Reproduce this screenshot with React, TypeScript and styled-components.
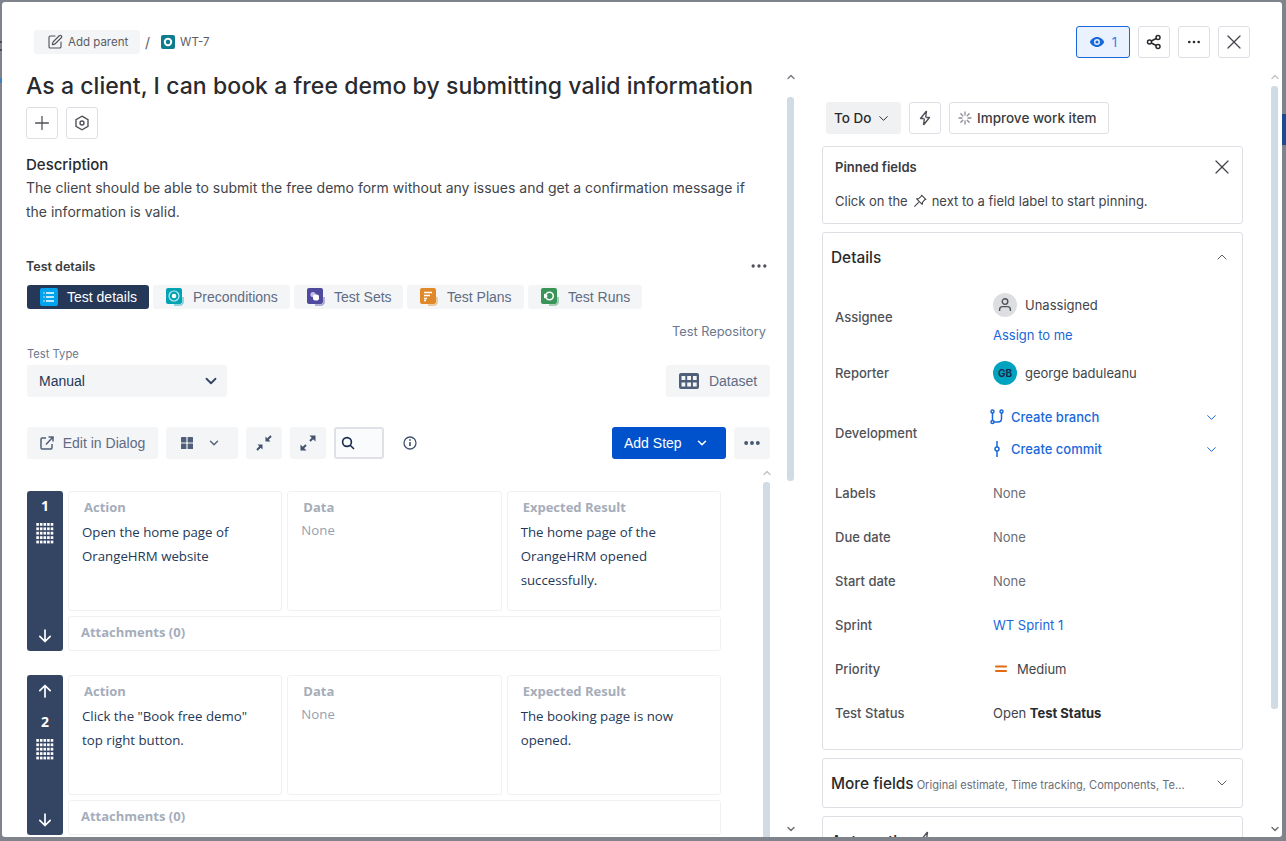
import styled, { createGlobalStyle } from 'styled-components';
import { ChevronDown, ChevronUp, Ellipsis, Plus, SquarePen, X } from 'lucide-react';

const GlobalStyle = createGlobalStyle`
  * { box-sizing: border-box; }
  html, body { margin: 0; padding: 0; overflow: hidden; }
  body { font-family: Inter, "Liberation Sans", sans-serif; color: #292a2e; }
`;

const Backdrop = styled.div`
  width: 1286px;
  height: 841px;
  padding: 2px 4px 4px 2px;
  overflow: hidden;
  background-color: #7f838b;
  background-image:
    linear-gradient(#1c4a94, #1c4a94),
    linear-gradient(#4a4e58, #4a4e58),
    linear-gradient(#4a4e58, #4a4e58),
    linear-gradient(#3f7fc4, #3f7fc4);
  background-repeat: no-repeat;
  background-size: 4px 31px, 2px 2px, 2px 2px, 2px 5px;
  background-position: 1282px 114px, 0 41px, 0 49px, 0 78px;
`;

const Dialog = styled.div`
  width: 1280px;
  height: 835px;
  background: #fff;
  border-radius: 3px;
  overflow: hidden;
  display: flex;
  flex-direction: column;
`;

const Header = styled.header`
  height: 68px;
  flex: none;
  padding: 24px 32px 0 32px;
  display: flex;
  justify-content: space-between;
  align-items: flex-start;
`;

const Crumbs = styled.div`
  display: flex;
  align-items: center;
  height: 32px;
  font-size: 11.5px;
  color: #5b5d63;
`;

const AddParent = styled.button`
  width: 106px;
  height: 24px;
  border: 0;
  border-radius: 3px;
  background: #f4f5f6;
  display: flex;
  align-items: center;
  gap: 5px;
  padding: 0 0 0 13px;
  font: 400 11.5px Inter, sans-serif;
  color: #5b5d63;
`;

const Slash = styled.span`
  margin: 0 11px 0 5px;
  font-size: 14px;
`;

const KeyLink = styled.span`
  display: flex;
  align-items: center;
  gap: 5px;
`;

const Actions = styled.div`
  display: flex;
  gap: 8px;
`;

const IconButton = styled.button<{ $active?: boolean }>`
  height: 32px;
  min-width: 32px;
  padding: 0 ${({ $active }) => ($active ? '12px' : '0')};
  display: inline-flex;
  align-items: center;
  justify-content: center;
  gap: 7px;
  border-radius: 3px;
  font: 400 13px Inter, sans-serif;
  color: ${({ $active }) => ($active ? '#357de8' : '#292a2e')};
  background: ${({ $active }) => ($active ? '#e9f2fe' : '#fff')};
  border: 1px solid ${({ $active }) => ($active ? '#1868db' : '#dcdfe4')};
`;

const Body = styled.div`
  flex: 1;
  min-height: 0;
  display: flex;
`;

const MainPane = styled.main`
  width: 792px;
  flex: none;
  display: flex;
  padding-left: 24px;
`;

const MainContent = styled.div`
  width: 744px;
  flex: none;
`;

const Title = styled.h1`
  margin: 0;
  height: 34px;
  font-size: 23px;
  line-height: 32px;
  font-weight: 500;
  letter-spacing: 0.06px;
  white-space: nowrap;
`;

const QuickActions = styled.div`
  display: flex;
  gap: 8px;
  margin-top: 3px;
  color: #505258;
`;

const SectionTitle = styled.h2`
  margin: 16px 0 0;
  font-size: 15px;
  line-height: 20px;
  font-weight: 500;
`;

const Paragraph = styled.p`
  margin: 1px 0 0;
  font-size: 14px;
  line-height: 24px;
  color: #42444a;
  width: 730px;
`;

const PanelHead = styled.div`
  margin: 32px 0 0;
  height: 20px;
  display: flex;
  justify-content: space-between;
  align-items: center;
  font-size: 12.5px;
  font-weight: 600;
  color: #3a3b40;
  padding-right: 1px;
`;

const Tabs = styled.div`
  margin: 9px 0 0 1px;
  display: flex;
  gap: 4px;
`;

const Tab = styled.div<{ $active?: boolean; $width: number }>`
  height: 24px;
  width: ${({ $width }) => $width}px;
  padding-left: 13px;
  border-radius: 3px;
  display: flex;
  align-items: center;
  gap: 9px;
  font: 400 14px "Liberation Sans", Arial, sans-serif;
  color: ${({ $active }) => ($active ? '#fff' : '#5e6c84')};
  background: ${({ $active }) => ($active ? '#253858' : '#f4f5f7')};
`;

const RepoLink = styled.div`
  margin-top: 13px;
  padding-right: 4px;
  height: 20px;
  line-height: 20px;
  text-align: right;
  font-size: 12.8px;
  color: #6b778c;
`;

const TypeRow = styled.div`
  display: flex;
  justify-content: space-between;
  align-items: flex-end;
  padding-left: 1px;
  margin-top: 4px;
`;

const TypeLabel = styled.div`
  font: 400 11.2px/16px Inter, sans-serif;
  color: #6b778c;
  margin-bottom: 3px;
`;

const Select = styled.div`
  width: 200px;
  height: 32px;
  padding: 0 7px 0 12px;
  border-radius: 3px;
  background: #f4f5f7;
  display: flex;
  align-items: center;
  justify-content: space-between;
  font: 400 14px "Liberation Sans", Arial, sans-serif;
  color: #253858;
`;

const Toolbar = styled.div`
  margin-top: 30px;
  padding-left: 1px;
  display: flex;
  align-items: center;
  gap: 8px;
`;

const ToolButton = styled.button<{ $width: number }>`
  width: ${({ $width }) => $width}px;
  height: 32px;
  border: 0;
  border-radius: 3px;
  background: #f4f5f7;
  display: flex;
  align-items: center;
  justify-content: center;
  gap: 9px;
  padding: 0;
  font: 400 14px "Liberation Sans", Arial, sans-serif;
  color: #5e6c84;
`;

const DatasetButton = styled(ToolButton)`
  gap: 10px;
`;

const ViewButton = styled(ToolButton)`
  gap: 14px;
  padding-right: 2px;
`;

const PrimaryButton = styled(ToolButton)`
  margin-left: auto;
  background: #0052cc;
  color: #fff;
  gap: 13px;
  justify-content: flex-start;
  padding-left: 12px;
`;

const SearchBox = styled.div`
  width: 50px;
  height: 32px;
  border: 2px solid #dfe1e6;
  border-radius: 3px;
  background: #fafbfc;
  display: flex;
  align-items: center;
  padding-left: 5px;
`;

const InfoSlot = styled.div`
  margin-left: 11px;
  display: flex;
`;

const StepsArea = styled.div`
  margin-top: 10px;
  display: flex;
  justify-content: space-between;
`;

const StepList = styled.div`
  padding: 22px 0 0 1px;
  display: flex;
  flex-direction: column;
  gap: 24px;
`;

const Step = styled.article`
  display: flex;
  gap: 5px;
`;

const StepRail = styled.div`
  width: 36px;
  height: 160px;
  flex: none;
  background: #344563;
  border-radius: 3px;
  color: #fff;
  display: flex;
  flex-direction: column;
  align-items: center;
  padding: 7px 0 6px;
  font: 700 14px/16px "Open Sans", sans-serif;
`;

const DragGrid = styled.div`
  margin-top: 8px;
`;

const ArrowSlot = styled.div<{ $bottom?: boolean }>`
  height: 18px;
  display: flex;
  align-items: center;
  margin-bottom: ${({ $bottom }) => ($bottom ? '0' : '14px')};
  margin-top: ${({ $bottom }) => ($bottom ? 'auto' : '0')};
`;

const StepBody = styled.div`
  width: 653px;
  display: flex;
  flex-direction: column;
  gap: 5px;
`;

const StepColumns = styled.div`
  display: flex;
  gap: 5px;
`;

const StepCard = styled.div`
  width: 215px;
  height: 120px;
  flex: 1;
  border: 1px solid #f0f1f3;
  border-radius: 3px;
  padding: 5px 13px;
  font: 400 13.25px/24px "Open Sans", sans-serif;
  color: #253858;
`;

const CardLabel = styled.div`
  margin: 0 0 0 2px;
  height: 23px;
  line-height: 20px;
  font-size: 13px;
  font-weight: 700;
  color: #a5adba;
`;

const EmptyValue = styled.div`
  margin-top: -2px;
  color: #97a0af;
`;

const Attachments = styled.div`
  height: 35px;
  border: 1px solid #f0f1f3;
  border-radius: 3px;
  padding-left: 12px;
  font: 700 13px/31px "Open Sans", sans-serif;
  color: #a5adba;
`;

const RailColumn = styled.div<{ $marginLeft: number }>`
  width: 7px;
  margin-left: ${({ $marginLeft }) => $marginLeft}px;
  flex: none;
  display: flex;
  flex-direction: column;
  align-items: center;
  overflow: visible;
`;

const RailArrow = styled.div<{ $color: string; $down?: boolean; $top?: number }>`
  height: 8px;
  width: 12px;
  flex: none;
  display: flex;
  align-items: center;
  justify-content: center;
  color: ${({ $color }) => $color};
  margin-top: ${({ $down, $top }) => ($down ? 'auto' : `${$top ?? 0}px`)};
  margin-bottom: ${({ $down }) => ($down ? '4px' : '0')};
`;

const RailThumb = styled.div<{ $top: number; $height: number }>`
  width: 7px;
  height: ${({ $height }) => $height}px;
  margin-top: ${({ $top }) => $top}px;
  flex: none;
  background: #d0dbe4;
  border-radius: 3px;
`;

const SidePane = styled.aside`
  width: 488px;
  flex: none;
  display: flex;
  padding-left: 28px;
`;

const SideContent = styled.div`
  width: 421px;
  flex: none;
`;

const StatusRow = styled.div`
  margin: 32px 0 0 4px;
  display: flex;
  gap: 8px;
`;

const StatusButton = styled.button`
  width: 75px;
  height: 32px;
  border: 0;
  border-radius: 3px;
  background: #f0f1f2;
  display: flex;
  align-items: center;
  gap: 5px;
  padding: 0 0 0 8px;
  font: 500 13.5px Inter, sans-serif;
  color: #292a2e;
`;

const ImproveButton = styled(IconButton)`
  width: 160px;
  gap: 5px;
  justify-content: flex-start;
  padding-left: 8px;
  font-weight: 500;
  font-size: 13.5px;
  color: #3a3b40;
`;

const Panel = styled.section`
  margin-top: 8px;
  border: 1px solid #dcdfe4;
  border-radius: 3px;
`;

const PinnedPanel = styled(Panel)`
  margin-top: 12px;
  height: 78px;
  padding: 10px 12px 0;
`;

const PinnedHead = styled.div`
  display: flex;
  justify-content: space-between;
  align-items: center;
  height: 20px;
  font-size: 13px;
  font-weight: 600;
  color: #3a3b40;
`;

const PinnedClose = styled.div`
  display: flex;
  margin-right: -4px;
`;

const PinnedText = styled.div`
  margin-top: 14px;
  display: flex;
  align-items: center;
  gap: 5px;
  font-size: 13px;
  line-height: 20px;
  color: #42444a;
`;

const PanelHeader = styled.div`
  height: 50px;
  padding: 0 12px 2px 8px;
  display: flex;
  align-items: center;
  justify-content: space-between;
  font-size: 15.4px;
  font-weight: 500;
  color: #292a2e;
`;

const CollapsedHeader = styled(PanelHeader)`
  height: 48px;
  padding-bottom: 0;
`;

const HeaderText = styled.div`
  display: flex;
  align-items: baseline;
  gap: 3px;
  white-space: nowrap;
`;

const HeaderHint = styled.span`
  font-size: 11.1px;
  font-weight: 400;
  color: #6b6e76;
`;

const FieldList = styled.div`
  padding: 0 12px 14px;
`;

const Field = styled.div<{ $height?: number }>`
  min-height: ${({ $height }) => $height ?? 44}px;
  display: grid;
  grid-template-columns: 158px 1fr;
  align-items: center;
`;

const FieldLabel = styled.div`
  font-size: 13px;
  font-weight: 500;
  color: #505258;
`;

const FieldValue = styled.div<{ $muted?: boolean }>`
  font-size: 13px;
  color: ${({ $muted }) => ($muted ? '#6b6e76' : '#42444a')};
`;

const AssigneeValue = styled(FieldValue)`
  padding-top: 4px;
`;

const Person = styled.div`
  display: flex;
  align-items: center;
  gap: 8px;
  height: 24px;
`;

const Avatar = styled.div<{ $teal?: boolean }>`
  width: 24px;
  height: 24px;
  border-radius: 50%;
  display: flex;
  align-items: center;
  justify-content: center;
  background: ${({ $teal }) => ($teal ? '#00a3bf' : '#dddee1')};
  color: #172b4d;
  font-size: 10px;
  font-weight: 700;
`;

const TextLink = styled.a<{ $top?: number }>`
  display: block;
  margin-top: ${({ $top }) => $top ?? 0}px;
  line-height: 20px;
  color: #1868db;
`;

const DevRow = styled.div`
  height: 32px;
  display: flex;
  align-items: center;
  gap: 7px;
  padding-right: 11px;
  margin-left: -3px;
  font-weight: 500;
  color: #1868db;
`;

const DevLabel = styled.span`
  flex: 1;
`;

const PriorityValue = styled(Person)`
  gap: 10px;
  margin-left: 2px;
`;

const StrongText = styled.strong`
  color: #292a2e;
  font-weight: 700;
`;

const EyeIcon = () => (
  <svg width="16" height="16" viewBox="0 0 16 16">
    <path d="M8 3C4.6 3 2 5.4.8 8c1.2 2.6 3.8 5 7.2 5s6-2.4 7.2-5C14 5.4 11.4 3 8 3z" fill="#1868db" />
    <circle cx="8" cy="8" r="3" fill="#e9f2fe" />
    <circle cx="8" cy="8" r="1.6" fill="#1868db" />
  </svg>
);

const ShareIcon = () => (
  <svg width="16" height="16" viewBox="0 0 16 16" fill="none" stroke="#292a2e" strokeWidth="1.5">
    <circle cx="3.5" cy="8" r="2" />
    <circle cx="12" cy="3.5" r="2" />
    <circle cx="12" cy="12.5" r="2" />
    <path d="M5.3 7 10.2 4.5M5.3 9l4.9 2.5" />
  </svg>
);

const WorkItemIcon = () => (
  <svg width="14" height="14" viewBox="0 0 14 14">
    <rect width="14" height="14" rx="2" fill="#0e7c8f" />
    <circle cx="7" cy="7" r="3.2" fill="none" stroke="#fff" strokeWidth="2" />
  </svg>
);

const HexIcon = () => (
  <svg width="16" height="16" viewBox="0 0 16 16" fill="none" stroke="#505258" strokeWidth="1.4">
    <path d="M8 1.2 14 4.6v6.8L8 14.8 2 11.4V4.6z" />
    <circle cx="8" cy="8" r="2" />
  </svg>
);

const BoltIcon = () => (
  <svg width="14" height="16" viewBox="0 0 14 16" fill="none" stroke="#505258" strokeWidth="1.4" strokeLinejoin="round">
    <path d="M8.5 1 2.5 8.5h3.2M5.5 15l6-7.5H8.3M8.5 1 7.6 7.5M5.5 15l.9-6.5" />
  </svg>
);

const SparkIcon = () => (
  <svg width="14" height="14" viewBox="0 0 14 14" stroke="#8c8f97" strokeWidth="1.3" strokeLinecap="round">
    <path d="M7 1v3M7 10v3M1 7h3M10 7h3M2.8 2.8l2 2M9.2 9.2l2 2M11.2 2.8l-2 2M4.8 9.2l-2 2" />
  </svg>
);

const PinIcon = () => (
  <svg width="14" height="14" viewBox="0 0 14 14" fill="none" stroke="#42444a" strokeWidth="1.1" strokeLinejoin="round">
    <path d="M8.6 1.2 12.8 5.4 11.6 5.8 9.4 8.4 9.2 10.4 3.6 4.8 5.6 4.6 8.2 2.4zM5.8 8.2 1.4 12.6" />
  </svg>
);

const UserIcon = () => (
  <svg width="16" height="16" viewBox="0 0 16 16" fill="none" stroke="#505258" strokeWidth="1.4">
    <circle cx="8" cy="4.6" r="2.8" />
    <path d="M2.6 14v-1.6c0-1.7 1.3-2.8 3-2.8h4.8c1.7 0 3 1.1 3 2.8V14" />
  </svg>
);

const BranchIcon = () => (
  <svg width="14" height="16" viewBox="0 0 14 16" fill="none" stroke="#1868db" strokeWidth="1.5">
    <circle cx="2.5" cy="2.5" r="1.5" />
    <circle cx="11.5" cy="2.5" r="1.5" />
    <circle cx="2.5" cy="13" r="1.5" />
    <path d="M2.5 4v7.5M11.5 4v5.5c0 2.2-1.3 3.5-3.5 3.5H4" />
  </svg>
);

const CommitIcon = () => (
  <svg width="14" height="16" viewBox="0 0 14 16" fill="none" stroke="#1868db" strokeWidth="1.5">
    <circle cx="7" cy="8" r="2" />
    <path d="M7 0v6M7 10v6" />
  </svg>
);

const MediumIcon = () => (
  <svg width="12" height="8" viewBox="0 0 12 8" fill="#e56910">
    <rect width="12" height="2" rx="1" y="0.5" />
    <rect width="12" height="2" rx="1" y="5" />
  </svg>
);

const TabIcon = ({ bg, kind }: { bg: string; kind: string }) => (
  <svg width="18" height="18" viewBox="0 0 18 18">
    {kind !== 'list' && <path d="M17 9v5.5c0 1.4-1 2.5-2.5 2.5H8" fill="none" stroke={bg} strokeWidth="0.8" />}
    <rect width={kind === 'list' ? 18 : 16} height={kind === 'list' ? 18 : 16} rx="2" fill={bg} />
    {kind === 'list' && (
      <path d="M6 5h8M6 9h8M6 13h8M3.5 5h1M3.5 9h1M3.5 13h1" stroke="#fff" strokeWidth="1.3" />
    )}
    {kind === 'pre' && (
      <>
        <circle cx="8" cy="8" r="5" fill="none" stroke="#bfeaef" strokeWidth="1.2" />
        <circle cx="8" cy="8" r="2.3" fill="#fff" />
      </>
    )}
    {kind === 'sets' && (
      <>
        <circle cx="6" cy="6.5" r="2.6" fill="#c7bdf0" />
        <rect x="6" y="6.5" width="6" height="6" rx="2" fill="#fff" />
      </>
    )}
    {kind === 'plans' && <path d="M4 4.5h8M4 7.5h6M4 10.5h3M4 12.5h2" stroke="#fff" strokeWidth="1.4" />}
    {kind === 'runs' && (
      <>
        <circle cx="8.5" cy="8" r="3.8" fill="none" stroke="#fff" strokeWidth="1.6" />
        <path d="M3 5.5 7 8l-4 2.5z" fill="#fff" />
      </>
    )}
  </svg>
);

const GridIcon = () => (
  <svg width="12" height="12" viewBox="0 0 12 12" fill="#505f79">
    <rect width="5.4" height="5.4" rx="0.5" />
    <rect x="6.6" width="5.4" height="5.4" rx="0.5" />
    <rect y="6.6" width="5.4" height="5.4" rx="0.5" />
    <rect x="6.6" y="6.6" width="5.4" height="5.4" rx="0.5" />
  </svg>
);

const TableIcon = () => (
  <svg width="20" height="16" viewBox="0 0 20 16">
    <rect width="20" height="16" rx="2" fill="#505f79" />
    {[2.5, 8.2, 13.9].flatMap((x) =>
      [3, 9.5].map((y) => <rect key={`${x}-${y}`} x={x} y={y} width="3.8" height="4" fill="#f4f5f7" />),
    )}
  </svg>
);

const ExternalIcon = () => (
  <svg width="14" height="14" viewBox="0 0 14 14" fill="none" stroke="#505f79" strokeWidth="1.5">
    <path d="M6 2H2.2C1.5 2 1 2.5 1 3.2v8.6c0 .7.5 1.2 1.2 1.2h8.6c.7 0 1.2-.5 1.2-1.2V8M6 8.5 12.5 1.5M8.5 1h4.5v4.5" />
  </svg>
);

const CollapseIcon = () => (
  <svg width="16" height="16" viewBox="0 0 16 16" fill="#42526e" stroke="#42526e">
    <path d="M15 1 10.5 5.5M1 15l4.5-4.5" fill="none" strokeWidth="2" />
    <path d="M9.5 1.5v5h5zM6.5 14.5v-5h-5z" strokeWidth="0" />
  </svg>
);

const ExpandIcon = () => (
  <svg width="16" height="16" viewBox="0 0 16 16" fill="#42526e" stroke="#42526e">
    <path d="M10 6 13 3M6 10l-3 3" fill="none" strokeWidth="2" />
    <path d="M15.5.5v6l-6-6zM.5 15.5v-6l6 6z" strokeWidth="0" />
  </svg>
);

const SearchIcon = () => (
  <svg width="14" height="14" viewBox="0 0 14 14" fill="none" stroke="#172b4d" strokeWidth="1.6">
    <circle cx="6" cy="6" r="4.4" />
    <path d="M9.2 9.2 13 13" />
  </svg>
);

const InfoIcon = () => (
  <svg width="14" height="14" viewBox="0 0 14 14" fill="none" stroke="#42526e" strokeWidth="1.3">
    <circle cx="7" cy="7" r="6" />
    <path d="M7 6v4" strokeWidth="1.6" />
    <circle cx="7" cy="4" r="0.9" fill="#42526e" stroke="none" />
  </svg>
);

const DotsGrid = () => (
  <svg width="18" height="22" viewBox="0 0 18 22" fill="#fff">
    {[0, 1, 2, 3, 4].flatMap((row) =>
      [0, 1, 2, 3, 4].map((col) => (
        <rect key={`${row}-${col}`} x={col * 3.6 + 0.3} y={row * 4.4 + 1} width="2.6" height="2.8" />
      )),
    )}
  </svg>
);

const StepArrow = ({ up }: { up?: boolean }) => (
  <svg width="14" height="14" viewBox="0 0 14 14" fill="none" stroke="#fff" strokeWidth="1.7" strokeLinecap="round" strokeLinejoin="round">
    {up ? <path d="M7 13V1.5M1.8 6.7 7 1.5l5.2 5.2" /> : <path d="M7 1v11.5M1.8 7.3 7 12.5l5.2-5.2" />}
  </svg>
);

const TAB_ITEMS = [
  { label: 'Test details', kind: 'list', bg: '#00a3ee', width: 122, active: true },
  { label: 'Preconditions', kind: 'pre', bg: '#00a3b4', width: 137 },
  { label: 'Test Sets', kind: 'sets', bg: '#4f4a9e', width: 109 },
  { label: 'Test Plans', kind: 'plans', bg: '#e0892b', width: 117 },
  { label: 'Test Runs', kind: 'runs', bg: '#399557', width: 114 },
];

const STEPS = [
  {
    number: 1,
    action: ['Open the home page of', 'OrangeHRM website'],
    result: ['The home page of the', 'OrangeHRM opened', 'successfully.'],
  },
  {
    number: 2,
    action: ['Click the "Book free demo"', 'top right button.'],
    result: ['The booking page is now', 'opened.'],
  },
];

const FIELDS = ['Labels', 'Due date', 'Start date'];

const Lines = ({ lines }: { lines: string[] }) => (
  <>
    {lines.map((line) => (
      <div key={line}>{line}</div>
    ))}
  </>
);

const App = () => {
  return (
    <Backdrop>
      <GlobalStyle />
      <Dialog>
        <Header>
          <Crumbs>
            <AddParent>
              <SquarePen size={16} strokeWidth={1.7} color="#505258" />
              Add parent
            </AddParent>
            <Slash>/</Slash>
            <KeyLink>
              <WorkItemIcon />
              WT-7
            </KeyLink>
          </Crumbs>
          <Actions>
            <IconButton $active>
              <EyeIcon />1
            </IconButton>
            <IconButton>
              <ShareIcon />
            </IconButton>
            <IconButton>
              <Ellipsis size={16} />
            </IconButton>
            <IconButton>
              <X size={24} strokeWidth={1.2} color="#42444a" />
            </IconButton>
          </Actions>
        </Header>
        <Body>
          <MainPane>
            <MainContent>
              <Title>As a client, I can book a free demo by submitting valid information</Title>
              <QuickActions>
                <IconButton>
                  <Plus size={22} strokeWidth={1.4} color="#505258" />
                </IconButton>
                <IconButton>
                  <HexIcon />
                </IconButton>
              </QuickActions>
              <SectionTitle>Description</SectionTitle>
              <Paragraph>
                The client should be able to submit the free demo form without any issues and get a confirmation
                message if the information is valid.
              </Paragraph>
              <PanelHead>
                Test details
                <Ellipsis size={20} color="#505258" />
              </PanelHead>
              <Tabs>
                {TAB_ITEMS.map((tab) => (
                  <Tab key={tab.label} $active={tab.active} $width={tab.width}>
                    <TabIcon bg={tab.bg} kind={tab.kind} />
                    {tab.label}
                  </Tab>
                ))}
              </Tabs>
              <RepoLink>Test Repository</RepoLink>
              <TypeRow>
                <div>
                  <TypeLabel>Test Type</TypeLabel>
                  <Select>
                    Manual
                    <ChevronDown size={18} strokeWidth={2.4} color="#344563" />
                  </Select>
                </div>
                <DatasetButton $width={104}>
                  <TableIcon />
                  Dataset
                </DatasetButton>
              </TypeRow>
              <Toolbar>
                <ToolButton $width={131}>
                  <ExternalIcon />
                  Edit in Dialog
                </ToolButton>
                <ViewButton $width={72}>
                  <GridIcon />
                  <ChevronDown size={14} strokeWidth={2.4} color="#505f79" />
                </ViewButton>
                <ToolButton $width={36}>
                  <CollapseIcon />
                </ToolButton>
                <ToolButton $width={36}>
                  <ExpandIcon />
                </ToolButton>
                <SearchBox>
                  <SearchIcon />
                </SearchBox>
                <InfoSlot>
                  <InfoIcon />
                </InfoSlot>
                <PrimaryButton $width={114}>
                  Add Step
                  <ChevronDown size={14} strokeWidth={2.6} />
                </PrimaryButton>
                <ToolButton $width={36}>
                  <Ellipsis size={20} strokeWidth={2.6} color="#42526e" />
                </ToolButton>
              </Toolbar>
              <StepsArea>
                <StepList>
                  {STEPS.map((step) => (
                    <Step key={step.number}>
                      <StepRail>
                        {step.number > 1 && (
                          <ArrowSlot>
                            <StepArrow up />
                          </ArrowSlot>
                        )}
                        {step.number}
                        <DragGrid>
                          <DotsGrid />
                        </DragGrid>
                        <ArrowSlot $bottom>
                          <StepArrow />
                        </ArrowSlot>
                      </StepRail>
                      <StepBody>
                        <StepColumns>
                          <StepCard>
                            <CardLabel>Action</CardLabel>
                            <Lines lines={step.action} />
                          </StepCard>
                          <StepCard>
                            <CardLabel>Data</CardLabel>
                            <EmptyValue>None</EmptyValue>
                          </StepCard>
                          <StepCard>
                            <CardLabel>Expected Result</CardLabel>
                            <Lines lines={step.result} />
                          </StepCard>
                        </StepColumns>
                        <Attachments>Attachments (0)</Attachments>
                      </StepBody>
                    </Step>
                  ))}
                </StepList>
                <RailColumn $marginLeft={0}>
                  <RailArrow $color="#c3c7cc">
                    <ChevronUp size={12} strokeWidth={3} />
                  </RailArrow>
                  <RailThumb $top={5} $height={400} />
                </RailColumn>
              </StepsArea>
            </MainContent>
            <RailColumn $marginLeft={17}>
              <RailArrow $color="#7d8188" $top={3}>
                <ChevronUp size={12} strokeWidth={3} />
              </RailArrow>
              <RailThumb $top={16} $height={384} />
              <RailArrow $color="#6f7379" $down>
                <ChevronDown size={12} strokeWidth={3} />
              </RailArrow>
            </RailColumn>
          </MainPane>
          <SidePane>
            <SideContent>
              <StatusRow>
                <StatusButton>
                  To Do
                  <ChevronDown size={15} strokeWidth={1.6} />
                </StatusButton>
                <IconButton>
                  <BoltIcon />
                </IconButton>
                <ImproveButton>
                  <SparkIcon />
                  Improve work item
                </ImproveButton>
              </StatusRow>
              <PinnedPanel>
                <PinnedHead>
                  Pinned fields
                  <PinnedClose>
                    <X size={24} strokeWidth={1.2} color="#42444a" />
                  </PinnedClose>
                </PinnedHead>
                <PinnedText>
                  Click on the <PinIcon /> next to a field label to start pinning.
                </PinnedText>
              </PinnedPanel>
              <Panel>
                <PanelHeader>
                  Details
                  <ChevronUp size={16} strokeWidth={1.4} color="#505258" />
                </PanelHeader>
                <FieldList>
                  <Field $height={68}>
                    <FieldLabel>Assignee</FieldLabel>
                    <AssigneeValue>
                      <Person>
                        <Avatar>
                          <UserIcon />
                        </Avatar>
                        Unassigned
                      </Person>
                      <TextLink $top={8}>Assign to me</TextLink>
                    </AssigneeValue>
                  </Field>
                  <Field>
                    <FieldLabel>Reporter</FieldLabel>
                    <FieldValue>
                      <Person>
                        <Avatar $teal>GB</Avatar>
                        george baduleanu
                      </Person>
                    </FieldValue>
                  </Field>
                  <Field $height={76}>
                    <FieldLabel>Development</FieldLabel>
                    <FieldValue>
                      <DevRow>
                        <BranchIcon />
                        <DevLabel>Create branch</DevLabel>
                        <ChevronDown size={15} strokeWidth={1.6} />
                      </DevRow>
                      <DevRow>
                        <CommitIcon />
                        <DevLabel>Create commit</DevLabel>
                        <ChevronDown size={15} strokeWidth={1.6} />
                      </DevRow>
                    </FieldValue>
                  </Field>
                  {FIELDS.map((label) => (
                    <Field key={label}>
                      <FieldLabel>{label}</FieldLabel>
                      <FieldValue $muted>None</FieldValue>
                    </Field>
                  ))}
                  <Field>
                    <FieldLabel>Sprint</FieldLabel>
                    <FieldValue>
                      <TextLink>WT Sprint 1</TextLink>
                    </FieldValue>
                  </Field>
                  <Field>
                    <FieldLabel>Priority</FieldLabel>
                    <FieldValue>
                      <PriorityValue>
                        <MediumIcon />
                        Medium
                      </PriorityValue>
                    </FieldValue>
                  </Field>
                  <Field>
                    <FieldLabel>Test Status</FieldLabel>
                    <FieldValue>
                      Open <StrongText>Test Status</StrongText>
                    </FieldValue>
                  </Field>
                </FieldList>
              </Panel>
              <Panel>
                <CollapsedHeader>
                  <HeaderText>
                    More fields
                    <HeaderHint>Original estimate, Time tracking, Components, Te...</HeaderHint>
                  </HeaderText>
                  <ChevronDown size={16} strokeWidth={1.4} color="#505258" />
                </CollapsedHeader>
              </Panel>
              <Panel>
                <CollapsedHeader>
                  <HeaderText>
                    Automation
                    <BoltIcon />
                  </HeaderText>
                </CollapsedHeader>
              </Panel>
            </SideContent>
            <RailColumn $marginLeft={28}>
              <RailArrow $color="#c3c7cc" $top={3}>
                <ChevronUp size={12} strokeWidth={3} />
              </RailArrow>
              <RailThumb $top={5} $height={623} />
              <RailArrow $color="#6f7379" $down>
                <ChevronDown size={12} strokeWidth={3} />
              </RailArrow>
            </RailColumn>
          </SidePane>
        </Body>
      </Dialog>
    </Backdrop>
  );
};

export default App;
